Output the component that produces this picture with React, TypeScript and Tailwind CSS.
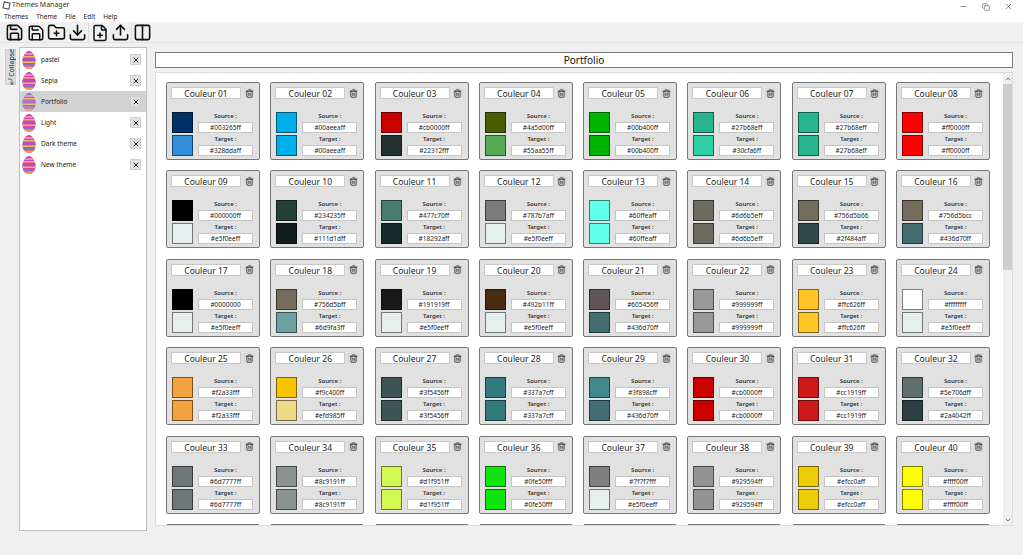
import { useId } from 'react';
import {
  ChevronDown,
  ChevronUp,
  Columns2,
  Copy,
  CornerDownLeft,
  Download,
  FilePlus,
  FolderPlus,
  Minus,
  Save,
  Trash2,
  Upload,
  X,
} from 'lucide-react';

const colours: [string, string][] = [
  ['#003265ff', '#328ddaff'], ['#00aeeaff', '#00aeeaff'], ['#cb0000ff', '#22312fff'], ['#4a5d00ff', '#55aa55ff'],
  ['#00b400ff', '#00b400ff'], ['#27b68eff', '#30cfa6ff'], ['#27b68eff', '#27b68eff'], ['#ff0000ff', '#ff0000ff'],
  ['#000000ff', '#e5f0eeff'], ['#234235ff', '#111d1dff'], ['#477c70ff', '#18292aff'], ['#787b7aff', '#e5f0eeff'],
  ['#60ffeaff', '#60ffeaff'], ['#6d6b5eff', '#6d6b5eff'], ['#756d5b66', '#2f484aff'], ['#756d5bcc', '#436d70ff'],
  ['#0000000', '#e5f0eeff'], ['#756d5bff', '#6d9fa3ff'], ['#191919ff', '#e5f0eeff'], ['#492b11ff', '#e5f0eeff'],
  ['#605456ff', '#436d70ff'], ['#999999ff', '#999999ff'], ['#ffc626ff', '#ffc626ff'], ['#ffffffff', '#e5f0eeff'],
  ['#f2a33fff', '#f2a33fff'], ['#f9c400ff', '#efd985ff'], ['#3f5456ff', '#3f5456ff'], ['#337a7cff', '#337a7cff'],
  ['#3f898cff', '#436d70ff'], ['#cb0000ff', '#cb0000ff'], ['#cc1919ff', '#cc1919ff'], ['#5e706dff', '#2a4042ff'],
  ['#6d7777ff', '#6d7777ff'], ['#8c9191ff', '#8c9191ff'], ['#d1f951ff', '#d1f951ff'], ['#0fe50fff', '#0fe50fff'],
  ['#7f7f7fff', '#e5f0eeff'], ['#929594ff', '#929594ff'], ['#efcc0aff', '#efcc0aff'], ['#ffff00ff', '#ffff00ff'],
];

const themes = ['pastel', 'Sepia', 'Portfolio', 'Light', 'Dark theme', 'New theme'];
const menus = ['Themes', 'Theme', 'File', 'Edit', 'Help'];
// the next row of cards only peeks out under the fold
const nextRow = [41, 42, 43, 44, 45, 46, 47, 48];

function Egg({ dim }: { dim?: boolean }) {
  const id = useId();
  return (
    <svg width="14" height="18" viewBox="0 0 14 18" className={dim ? 'opacity-75' : ''}>
      <clipPath id={id}>
        <path d="M7 0C3.500 0 .5 5.500.5 10.500.5 15 3.500 18 7 18s6.500-3 6.500-7.500C13.500 5.500 10.500 0 7 0z" />
      </clipPath>
      <g clipPath={`url(#${id})`}>
        <rect width="14" height="18" fill={dim ? '#6d4fc0' : '#d63fae'} />
        <rect y="2" width="14" height="2" fill="#e58ad0" />
        <rect y="5" width="14" height="1.500" fill="#f3b84a" />
        <rect y="7" width="14" height="3" fill="#b04fc8" />
        <rect y="10.500" width="14" height="1.500" fill="#f5c23c" />
        <rect y="13" width="14" height="2" fill="#8a6ed8" />
        <rect y="15.500" width="14" height="2.500" fill="#f0a24a" />
      </g>
    </svg>
  );
}

function ToolButton({ children }: { children: React.ReactNode }) {
  return <button className="w-[21px] h-[20px] flex items-center justify-center text-[#111]">{children}</button>;
}

function ThemeRow({ name, selected }: { name: string; selected: boolean }) {
  return (
    <div className={`flex items-center h-[21px] pl-[2px] pr-[5px] ${selected ? 'bg-[#d3d3d3]' : ''}`}>
      <Egg dim={selected} />
      <span className="ml-[5px] flex-1 text-[6.500px] text-[#222]">{name}</span>
      <button className="w-[11px] h-[11px] flex items-center justify-center bg-[#e1e1e1] border border-[#cfcfcf]">
        <X size={8} strokeWidth={3} className="text-[#222]" />
      </button>
    </div>
  );
}

function ColourField({ label, value }: { label: string; value: string }) {
  return (
    <div className="w-[55px] flex flex-col">
      <div className="h-[10px] leading-[9px] text-center text-[6px] font-semibold text-[#333]">{label} :</div>
      <div className="h-[11px] leading-[9px] bg-white border border-[#c4c4c4] text-center text-[6.500px] text-[#222]">
        {value}
      </div>
    </div>
  );
}

function ColourCard({ index, source, target }: { index: number; source: string; target: string }) {
  const label = `Couleur ${String(index).padStart(2, '0')}`;
  return (
    <div className="h-[78px] bg-[#e1e1e1] border border-[#777] rounded-[2px] pt-[4px] pl-[4px]">
      <div className="flex items-center h-[12px]">
        <div className="w-[70px] h-[12px] leading-[11px] bg-white border border-[#c8c8c8] text-center text-[8.500px] text-[#222]">
          {label}
        </div>
        <button className="ml-[3px] w-[10px] h-[10px] flex items-center justify-center bg-[#d9d9d9]">
          <Trash2 size={9} strokeWidth={2} className="text-[#222]" />
        </button>
      </div>
      <div className="mt-[13px] ml-[1px] flex flex-col gap-[2px]">
        <div className="flex gap-[5px]">
          <div className="w-[21px] h-[21px] border border-black/50" style={{ backgroundColor: source.slice(0, 7) }} />
          <ColourField label="Source" value={source} />
        </div>
        <div className="flex gap-[5px]">
          <div className="w-[21px] h-[21px] border border-black/50" style={{ backgroundColor: target.slice(0, 7) }} />
          <ColourField label="Target" value={target} />
        </div>
      </div>
    </div>
  );
}

export default function App() {
  return (
    <div className="w-[1023px] h-[555px] overflow-hidden flex flex-col bg-[#f0f0f0] font-['Noto_Sans',sans-serif]">
      {/* Title bar and menu */}
      <div className="bg-white h-[22px] flex flex-col shrink-0">
        <div className="h-[11px] flex items-center pl-[3px] relative">
          <div className="w-[7px] h-[7px] border border-[#444] rotate-12" />
          <span className="ml-[2px] text-[7px] text-[#333]">Themes Manager</span>
          <div className="ml-auto flex items-center gap-[14px] pr-[10px] text-[#333] pt-[2px]">
            <Minus size={9} strokeWidth={1.500} />
            <Copy size={8} strokeWidth={1.500} />
            <X size={9} strokeWidth={1.500} />
          </div>
        </div>
        <div className="h-[11px] flex items-center pl-[4px] gap-[8px] text-[6.500px] text-[#222]">
          {menus.map((m) => (
            <span key={m}>{m}</span>
          ))}
        </div>
      </div>

      {/* Toolbar */}
      <div className="h-[20px] shrink-0 flex items-center pl-[4px] pt-[1px] bg-[#f0f0f0]">
        <ToolButton><Save size={19} strokeWidth={2} /></ToolButton>
        <ToolButton><Save size={18} strokeWidth={2} /></ToolButton>
        <ToolButton><FolderPlus size={19} strokeWidth={2} /></ToolButton>
        <ToolButton><Download size={19} strokeWidth={2} /></ToolButton>
        <div className="border-l border-[#dcdcdc] flex">
          <ToolButton><FilePlus size={18} strokeWidth={2} /></ToolButton>
          <ToolButton><Upload size={19} strokeWidth={2} /></ToolButton>
        </div>
        <div className="border-l border-[#dcdcdc] flex">
          <ToolButton><Columns2 size={19} strokeWidth={2} /></ToolButton>
        </div>
      </div>

      {/* Body */}
      <div className="flex-1 flex border-t border-[#e4e4e4] pl-[5px]">
        <button className="mt-[6px] w-[11px] h-[36px] bg-[#dedede] border border-[#cfcfcf] flex items-center justify-center">
          <span className="flex flex-col items-center gap-[1px] rotate-180">
            <CornerDownLeft size={8} strokeWidth={2} className="rotate-90 text-[#222]" />
            <span className="[writing-mode:vertical-rl] text-[7px] leading-none text-[#222]">Collapse</span>
          </span>
        </button>

        <div className="ml-[3px] mt-[4px] w-[128px] h-[484px] bg-white border border-[#bdbdbd] pt-[1px]">
          {themes.map((t) => (
            <ThemeRow key={t} name={t} selected={t === 'Portfolio'} />
          ))}
        </div>

        <div className="ml-[8px] w-[858px]">
          <div className="mt-[9px] h-[16px] leading-[14px] bg-white border border-[#777] text-center text-[10px] text-[#111]">
            Portfolio
          </div>
          <div className="mt-[4px] h-[454px] flex bg-white border border-[#dcdcdc] overflow-hidden">
            <div className="flex-1 pt-[9px] pl-[10px]">
              <div className="w-[824px] grid grid-cols-[repeat(8,94px)] justify-between gap-y-[10.400px]">
                {colours.map(([source, target], i) => (
                  <ColourCard key={i} index={i + 1} source={source} target={target} />
                ))}
                {nextRow.map((n) => (
                  <div key={n} className="h-[78px] bg-[#e1e1e1] border border-[#777] rounded-[2px]" />
                ))}
              </div>
            </div>
            <div className="w-[9px] bg-[#f0f0f0] flex flex-col items-center text-[#555]">
              <ChevronUp size={8} strokeWidth={2.500} className="mt-[2px]" />
              <div className="mt-[1px] w-full h-[186px] bg-[#cdcdcd]" />
              <ChevronDown size={8} strokeWidth={2.500} className="mt-auto mb-[1px]" />
            </div>
          </div>
        </div>
      </div>
    </div>
  );
}
